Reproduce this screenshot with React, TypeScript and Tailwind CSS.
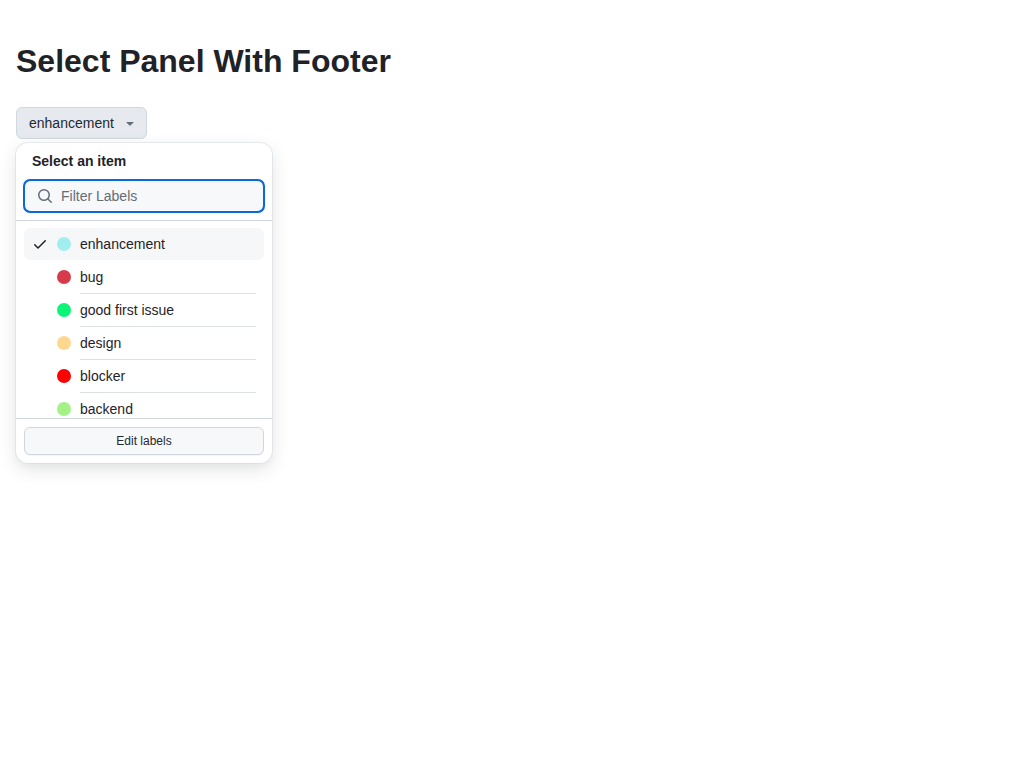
import { useState } from "react";
import clsx from "clsx";

type Label = { name: string; dot: string };

const labels: Label[] = [
  { name: "enhancement", dot: "bg-[#a2eeef]" },
  { name: "bug", dot: "bg-[#d73a4a]" },
  { name: "good first issue", dot: "bg-[#0cf478]" },
  { name: "design", dot: "bg-[#ffd78e]" },
  { name: "blocker", dot: "bg-[#ff0000]" },
  { name: "backend", dot: "bg-[#a4f287]" },
];

function Icon({ d, className }: { d: string; className?: string }) {
  return (
    <svg viewBox="0 0 16 16" fill="currentColor" aria-hidden="true" className={clsx("size-4 shrink-0", className)}>
      <path d={d} />
    </svg>
  );
}

const searchPath =
  "M10.68 11.74a6 6 0 0 1-7.922-8.982 6 6 0 0 1 8.982 7.922l3.04 3.04a.749.749 0 0 1-.326 1.275.749.749 0 0 1-.734-.215ZM11.5 7a4.499 4.499 0 1 0-8.997 0A4.499 4.499 0 0 0 11.5 7Z";
const checkPath =
  "M13.78 4.22a.75.75 0 0 1 0 1.06l-7.25 7.25a.75.75 0 0 1-1.06 0L2.22 9.28a.751.751 0 0 1 .018-1.042.751.751 0 0 1 1.042-.018L6 10.94l6.72-6.72a.75.75 0 0 1 1.06 0Z";
const trianglePath =
  "m4.427 7.427 3.396 3.396a.25.25 0 0 0 .354 0l3.396-3.396A.25.25 0 0 0 11.396 7H4.604a.25.25 0 0 0-.177.427Z";

export default function App() {
  const [open, setOpen] = useState(true);
  const [selected, setSelected] = useState("enhancement");
  const [filter, setFilter] = useState("");
  const shown = labels.filter((l) => l.name.includes(filter.toLowerCase()));

  return (
    <main className="min-h-screen px-4 pt-[37px] font-['Liberation_Sans',Arial,sans-serif] text-sm text-[#1f2328]">
      <h1 className="mb-[22px] text-[32px] leading-[48px] font-bold">Select Panel With Footer</h1>
      <div className="relative w-fit">
        <button
          type="button"
          aria-haspopup="true"
          aria-expanded={open}
          onClick={() => setOpen(!open)}
          className="flex h-8 items-center gap-2 rounded-md border border-[#d0d7de] bg-[#e6eaef] pr-2 pl-3 text-[#24292f]"
        >
          {selected}
          <Icon d={trianglePath} className="text-[#656d76]" />
        </button>
        {open && (
          <section
            role="dialog"
            aria-labelledby="panel-title"
            className="absolute top-full left-0 mt-1 flex h-80 w-64 flex-col overflow-hidden rounded-xl bg-white shadow-[0_0_0_1px_#d1d9e080,0_6px_12px_-3px_#25292e0a,0_6px_18px_0_#25292e1f]"
          >
            <header className="border-b border-[#d0d7de] p-2">
              <h2 id="panel-title" className="mb-2 px-2 leading-[21px] font-bold">
                Select an item
              </h2>
              <label className="flex h-8 items-center gap-2 rounded-md border border-[#0969da] bg-[#f6f8fa] px-3 outline-2 -outline-offset-1 outline-[#0969da]">
                <Icon d={searchPath} className="text-[#656d76]" />
                <input
                  type="text"
                  aria-label="Filter Labels"
                  placeholder="Filter Labels"
                  value={filter}
                  onChange={(e) => setFilter(e.target.value)}
                  className="min-w-0 flex-1 bg-transparent leading-5 outline-none placeholder:text-[#656d76]"
                />
              </label>
            </header>
            <ul
              role="listbox"
              aria-label="Labels"
              className="min-h-0 flex-1 overflow-y-auto px-2 pt-[7px] pb-2 [scrollbar-width:none]"
            >
              {shown.map((label, i) => {
                const active = label.name === selected;
                const divided = i > 0 && !active && shown[i - 1].name !== selected;
                return (
                  <li key={label.name} role="option" aria-selected={active}>
                    {i > 0 && <div className={clsx("mr-2 ml-14 h-px", divided && "bg-[#d0d7de]/75")} />}
                    <button
                      type="button"
                      onClick={() => setSelected(label.name)}
                      className={clsx(
                        "flex h-8 w-full items-center gap-2 rounded-md px-2 text-left",
                        active && "bg-[#f6f7f8]",
                      )}
                    >
                      <Icon d={checkPath} className={active ? "" : "invisible"} />
                      <span className="flex size-4 items-center justify-center">
                        <span className={clsx("size-3.5 rounded-full", label.dot)} />
                      </span>
                      {label.name}
                    </button>
                  </li>
                );
              })}
            </ul>
            <footer className="border-t border-[#d0d7de] p-2">
              <button
                type="button"
                className="block h-7 w-full rounded-md border border-[#d0d7de] bg-[#f6f8fa] text-xs text-[#24292f] shadow-[0_1px_0_0_#1f23280a]"
              >
                Edit labels
              </button>
            </footer>
          </section>
        )}
      </div>
    </main>
  );
}
